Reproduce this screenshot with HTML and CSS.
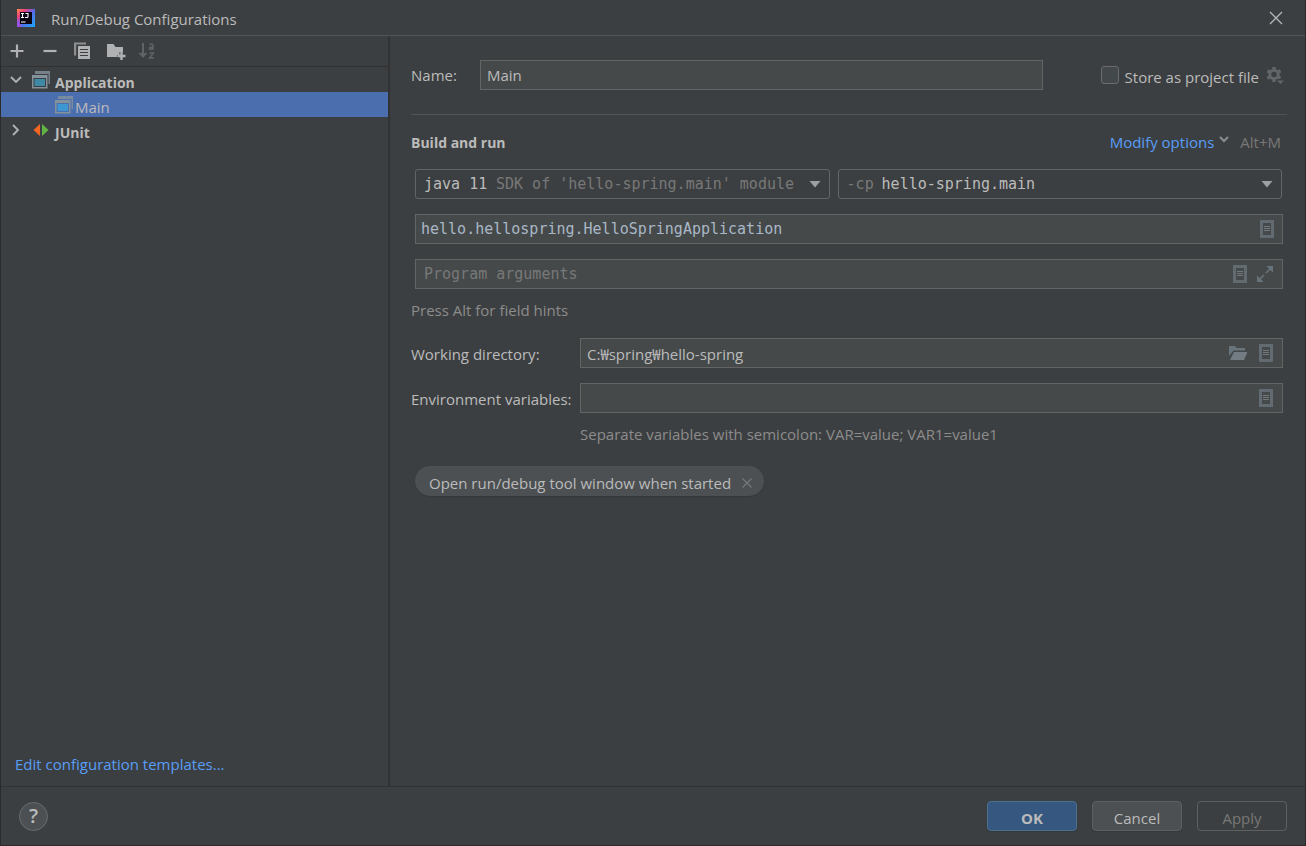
FILE: index.html
```html
<!DOCTYPE html>
<html lang="en">
<head>
<meta charset="utf-8">
<title>Run/Debug Configurations</title>
<link rel="stylesheet" href="styles.css">
</head>
<body>
<svg class="defs" width="0" height="0" aria-hidden="true">
  <linearGradient id="logo-bg" x1="0" y1="0" x2="1" y2="1">
    <stop offset="0" stop-color="#fc8c4c"/><stop offset=".25" stop-color="#f0407c"/><stop offset=".5" stop-color="#5a68e8"/><stop offset="1" stop-color="#18a8ff"/>
  </linearGradient>
  <symbol id="i-list" viewBox="0 0 14 18">
    <rect x="1.500" y="1.500" width="11" height="15" fill="none" stroke="#626b71" stroke-width="3"/>
    <path d="M4 6.500h6M4 8.500h6M4 10.500h6" stroke="#72797d" stroke-width="1"/>
  </symbol>
  <symbol id="i-app" viewBox="0 0 18 18">
    <path d="M3 0h15v13h-1.500V3H3z" fill="#84929b" opacity=".8"/>
    <path d="M0 4h15.500v13.500H0zM1.500 7v9H14V7z" fill="#84929b" fill-rule="evenodd"/>
  </symbol>
</svg>
<div class="dialog">
  <header class="titlebar">
    <svg class="logo" width="18" height="18" viewBox="0 0 18 18" aria-hidden="true">
      <rect width="18" height="18" fill="url(#logo-bg)"/>
      <path d="M0 10v8h5z" fill="#9a50e0"/>
      <rect x="3" y="3" width="12" height="12" fill="#0b0410"/>
      <path d="M4 4.500h3M5.500 4.500v4M4 8.500h3M8.500 4.500h2.500v3.200q0 .8-.9.800H8M4 13h4.500" stroke="#fff" stroke-width="1.100" fill="none"/>
    </svg>
    <h1 class="title">Run/Debug Configurations</h1>
    <button class="icon-btn" aria-label="Close"><svg width="14" height="14" viewBox="0 0 14 14"><path d="M1 1l12 12M13 1L1 13" stroke="#b4b6b7" stroke-width="1.300"/></svg></button>
  </header>
  <div class="body">
    <aside class="sidebar">
      <div class="toolbar">
        <button class="icon-btn" aria-label="Add"><svg width="18" height="18" viewBox="0 0 18 18"><path d="M9 2.500v13M2.500 9h13" stroke="#afb1b3" stroke-width="2.200"/></svg></button>
        <button class="icon-btn" aria-label="Remove"><svg width="18" height="18" viewBox="0 0 18 18"><path d="M2.500 9h13" stroke="#afb1b3" stroke-width="2.200"/></svg></button>
        <button class="icon-btn" aria-label="Copy"><svg width="18" height="18" viewBox="0 0 18 18"><path d="M0 .5h12v2H2.200v11H0z" fill="#8d8f90"/><path d="M4 4h12v13H4z" fill="#afb1b3"/><path d="M6 7.500h8M6 10.500h8M6 13.500h8" stroke="#3c3f41" stroke-width="1.200"/></svg></button>
        <button class="icon-btn" aria-label="New folder"><svg width="20" height="18" viewBox="0 0 20 18"><path d="M0 2h6.500l2 3H16v5h-3.500v3H10v2H0z" fill="#afb1b3"/><path d="M14.500 10v8M10.500 14h8" stroke="#afb1b3" stroke-width="2.400"/></svg></button>
        <button class="icon-btn" aria-label="Sort alphabetically" disabled><svg width="18" height="18" viewBox="0 0 18 18"><path d="M5 1v12" stroke="#606366" stroke-width="2"/><path d="M.5 11h9L5 16z" fill="#606366"/><path d="M11.500 2.500q3.500-1.500 3.500 1V8M15 5q-3.600-.3-3.600 1.500T15 6.500M11.500 11h4l-4 5h4.500" stroke="#606366" stroke-width="1.500" fill="none"/></svg></button>
      </div>
      <ul class="tree">
        <li class="row">
          <svg class="arrow" width="12" height="8" viewBox="0 0 12 8"><path d="M1 1l5 5 5-5" stroke="#b0b2b4" stroke-width="1.800" fill="none"/></svg>
          <svg class="type" width="18" height="18"><use href="#i-app"/><rect x="2.500" y="8" width="10.500" height="7" fill="#3e89a5"/></svg>
          <span class="group">Application</span>
        </li>
        <li class="row child selected">
          <svg class="type" width="18" height="18"><use href="#i-app"/><rect x="2.500" y="8" width="10.500" height="7" fill="#3e97d2"/></svg>
          <span>Main</span>
        </li>
        <li class="row">
          <svg class="arrow" width="12" height="12" viewBox="0 0 12 12"><path d="M3 1l5 5-5 5" stroke="#b0b2b4" stroke-width="1.800" fill="none"/></svg>
          <svg class="type" width="18" height="14" viewBox="0 0 18 14"><path d="M8 1v12L1.500 7z" fill="#f26522"/><path d="M10 1v12l6.500-6z" fill="#62b543"/></svg>
          <span class="group">JUnit</span>
        </li>
      </ul>
      <a class="link templates" href="#">Edit configuration templates...</a>
    </aside>
    <main class="form">
      <div class="name-row">
        <label class="label" for="name">Name:</label>
        <input class="field name" id="name" type="text" value="Main">
        <label class="store"><input class="check" type="checkbox">Store as project file</label>
        <button class="icon-btn" aria-label="Storage settings"><svg width="18" height="18" viewBox="0 0 18 18"><circle cx="8" cy="8.500" r="4.200" fill="none" stroke="#626568" stroke-width="3"/><path d="M8 1v3M8 13v3M1.500 4.750l2.600 1.500M11.900 10.750l2.600 1.500M1.500 12.250l2.600-1.500M11.900 6.250l2.600-1.500" stroke="#626568" stroke-width="3.400"/><path d="M10 13h8l-4 5z" fill="#3c3f41"/><path d="M11 14.500h7L14.500 18z" fill="#626568"/></svg></button>
      </div>
      <hr class="rule">
      <div class="section-head">
        <h2 class="heading">Build and run</h2>
        <a class="link" href="#">Modify options</a>
        <svg class="mini" width="10" height="7" viewBox="0 0 10 7"><path d="M1 1l4 4 4-4" stroke="#8b8e90" stroke-width="2" fill="none"/></svg>
        <span class="shortcut">Alt+M</span>
      </div>
      <div class="fields">
        <div class="combos">
          <div class="combo jre">
            <select class="select" aria-label="Java runtime"><option>java 11</option></select>
            <span class="note">SDK of 'hello-spring.main' module</span>
            <svg class="tri" width="12" height="7" viewBox="0 0 12 7"><path d="M.5 0h11L6 6.500z" fill="#9da0a2"/></svg>
          </div>
          <div class="combo cp">
            <span class="note">-cp</span>
            <select class="select" aria-label="Classpath module"><option>hello-spring.main</option></select>
            <svg class="tri" width="12" height="7" viewBox="0 0 12 7"><path d="M.5 0h11L6 6.500z" fill="#9da0a2"/></svg>
          </div>
        </div>
        <div class="field box code main-class">
          <input class="bare" type="text" aria-label="Main class" value="hello.hellospring.HelloSpringApplication">
          <button class="icon-btn" aria-label="Browse classes"><svg width="14" height="18"><use href="#i-list"/></svg></button>
        </div>
        <div class="field box code">
          <input class="bare" type="text" aria-label="Program arguments" placeholder="Program arguments">
          <button class="icon-btn" aria-label="Insert macro"><svg width="14" height="18"><use href="#i-list"/></svg></button>
          <button class="icon-btn" aria-label="Expand"><svg width="16" height="16" viewBox="0 0 16 16"><path d="M9.500 0H16v6.500zM0 9.500V16h6.500z" fill="#68747b"/><path d="M13.500 2.500L9 7M2.500 13.500L7 9" stroke="#68747b" stroke-width="1.600"/></svg></button>
        </div>
      </div>
      <p class="hint">Press Alt for field hints</p>
      <div class="env">
        <label class="label" for="wd">Working directory:</label>
        <div class="field box">
          <input class="bare" id="wd" type="text" value="C:₩spring₩hello-spring">
          <button class="icon-btn" aria-label="Browse folders"><svg width="18" height="16" viewBox="0 0 18 16"><path d="M0 1h6l1.500 2H16v2.500H4.500L0 11z" fill="#68747b"/><path d="M5 7h13.500L15 15H1z" fill="#727c82"/></svg></button>
          <button class="icon-btn" aria-label="Insert macro"><svg width="14" height="18"><use href="#i-list"/></svg></button>
        </div>
        <label class="label" for="env">Environment variables:</label>
        <div class="field box">
          <input class="bare" id="env" type="text">
          <button class="icon-btn" aria-label="Edit variables"><svg width="14" height="18"><use href="#i-list"/></svg></button>
        </div>
        <p class="hint env-hint">Separate variables with semicolon: VAR=value; VAR1=value1</p>
      </div>
      <div class="chip">
        <span>Open run/debug tool window when started</span>
        <button class="icon-btn" aria-label="Remove option"><svg width="12" height="12" viewBox="0 0 12 12"><path d="M1.500 1.500l9 9M10.500 1.500l-9 9" stroke="#74787b" stroke-width="1.200"/></svg></button>
      </div>
    </main>
  </div>
  <footer class="footer">
    <button class="help" aria-label="Help">?</button>
    <button class="btn primary">OK</button>
    <button class="btn">Cancel</button>
    <button class="btn" disabled>Apply</button>
  </footer>
</div>
</body>
</html>
```
FILE: styles.css
```css
* { box-sizing: border-box; }
body {
  margin: 0;
  background: #3c3f41;
  color: #bbbbbb;
  font: 15px/20px "Open Sans", "Noto Sans CJK KR", sans-serif;
}
button, input, select { font: inherit; color: inherit; margin: 0; }
h1, h2, p, ul { margin: 0; padding: 0; }
.defs { display: block; height: 0; }
.dialog {
  display: flex;
  flex-direction: column;
  min-height: 100vh;
  border: solid #2b2b2b;
  border-width: 0 1px 1px;
}
.icon-btn {
  display: flex;
  padding: 0;
  border: 0;
  background: none;
}
.link { color: #589df6; text-decoration: none; }

.titlebar {
  display: flex;
  align-items: center;
  height: 36px;
  padding: 0 22px 0 16px;
  border-bottom: 1px solid #515354;
}
.title {
  flex: 1;
  margin-left: 16px;
  padding-top: 3px;
  font-size: 15px;
  font-weight: 400;
}

.body { display: flex; flex: 1; }
.sidebar {
  display: flex;
  flex-direction: column;
  flex: 0 0 389px;
  border-right: 2px solid #323232;
}
.toolbar {
  display: flex;
  align-items: center;
  gap: 15px;
  height: 31px;
  padding-left: 7px;
  border-bottom: 1px solid #323232;
}
.toolbar .icon-btn:nth-child(4) { margin-right: -4px; }
.tree { flex: 1; list-style: none; }
.row {
  display: flex;
  align-items: center;
  height: 25px;
  padding-left: 9px;
}
.row .arrow { margin-right: 10px; }
.row .type { margin-right: 5px; }
.row span { padding-top: 5px; }
.row svg { display: block; }
.child { padding-left: 54px; }
.child .type { margin-right: 2px; }
.selected { background: #4b6eaf; }
.group { font-weight: 700; font-size: 14px; }
.row .group { padding-top: 6px; }
.templates { padding: 0 14px 12px; }

.form { flex: 1; padding: 24px 18px 0 21px; }
.field {
  height: 30px;
  border: 1px solid #646464;
  background: #45494a;
}
.name-row { display: flex; align-items: center; }
.name-row .label { width: 69px; }
.name { flex: 1; padding: 0 6px; border-radius: 0; min-width: 0; }
.store { display: flex; align-items: center; margin: 4px 7px 0 58px; }
.check {
  appearance: none;
  width: 18px;
  height: 18px;
  margin: -4px 6px 0 0;
  border: 1px solid #6b6b6b;
  border-radius: 3px;
  background: #43494a;
}
.name-row .icon-btn { margin-right: 3px; }
.rule { height: 1px; margin: 24px 0 0; border: 0; background: #515354; }
.section-head { display: flex; align-items: center; height: 54px; padding: 0 6px 0 0; }
.heading { flex: 1; font-size: 14px; font-weight: 700; line-height: 20px; padding-top: 1px; }
.mini { margin: 0 11px 5px 5px; }
.shortcut { color: #787878; }

.fields { display: grid; gap: 15px; padding: 0 4px; }
.combos { display: flex; gap: 8px; padding-right: 1px; }
.combo, .code { font-family: "DejaVu Sans Mono", monospace; }
.combo {
  display: grid;
  align-items: center;
  height: 30px;
  border: 1px solid #646464;
  border-radius: 3px;
}
.jre { flex: 415; }
.cp { flex: 445; }
.combo > * { grid-area: 1 / 1; }
.select {
  appearance: none;
  width: 100%;
  height: 28px;
  padding: 0 28px 0 8px;
  border: 0;
  background: transparent;
}
.note { color: #787878; margin-left: 80px; pointer-events: none; white-space: nowrap; }
.cp .note { margin-left: 8px; }
.cp .select { padding-left: 43px; }
.tri { justify-self: end; margin-right: 8px; pointer-events: none; }
.box { display: flex; align-items: center; gap: 12px; padding: 0 9px 0 0; }
.bare {
  flex: 1;
  min-width: 0;
  height: 28px;
  padding: 0 8px;
  border: 0;
  background: transparent;
}
.bare::placeholder { color: #787878; opacity: 1; }
.main-class { color: #a9b7c6; padding-right: 8px; }
.main-class .bare { padding-left: 5px; }
.code .icon-btn { margin-left: -2px; }
.hint { color: #8c8c8c; }
.form > .hint { padding: 11px 0 18px; }
.env {
  display: grid;
  grid-template-columns: 154px 1fr;
  gap: 15px;
  padding-right: 4px;
  align-items: center;
}
.env .label { padding-top: 2px; white-space: nowrap; }
.env .bare { padding: 0 6px; }
.env-hint { grid-column: 2; margin-top: -4px; }
.chip {
  display: inline-flex;
  align-items: center;
  gap: 10px;
  height: 30px;
  margin: 22px 4px;
  padding: 3px 11px 0 14px;
  border-radius: 15px;
  background: #4c5052;
  box-shadow: 0 1px 1px #35383a;
}

.footer {
  display: flex;
  align-items: center;
  gap: 15px;
  height: 59px;
  padding: 0 18px;
  border-top: 1px solid #323232;
}
.help {
  width: 29px;
  height: 29px;
  margin-right: auto;
  padding: 0;
  border: 1px solid #6a6d6f;
  border-radius: 50%;
  background: #4c5052;
  font-size: 20px;
  font-weight: 600;
}
.btn {
  width: 90px;
  height: 30px;
  padding: 3px 0 0;
  border: 1px solid #5e6060;
  border-radius: 4px;
  background: #4c5052;
  box-shadow: 0 1px 1px #35383a;
}
.btn:disabled { background: none; color: #777777; box-shadow: none; }
.primary { background: #365880; border-color: #4c708c; font-weight: 700; }
```
